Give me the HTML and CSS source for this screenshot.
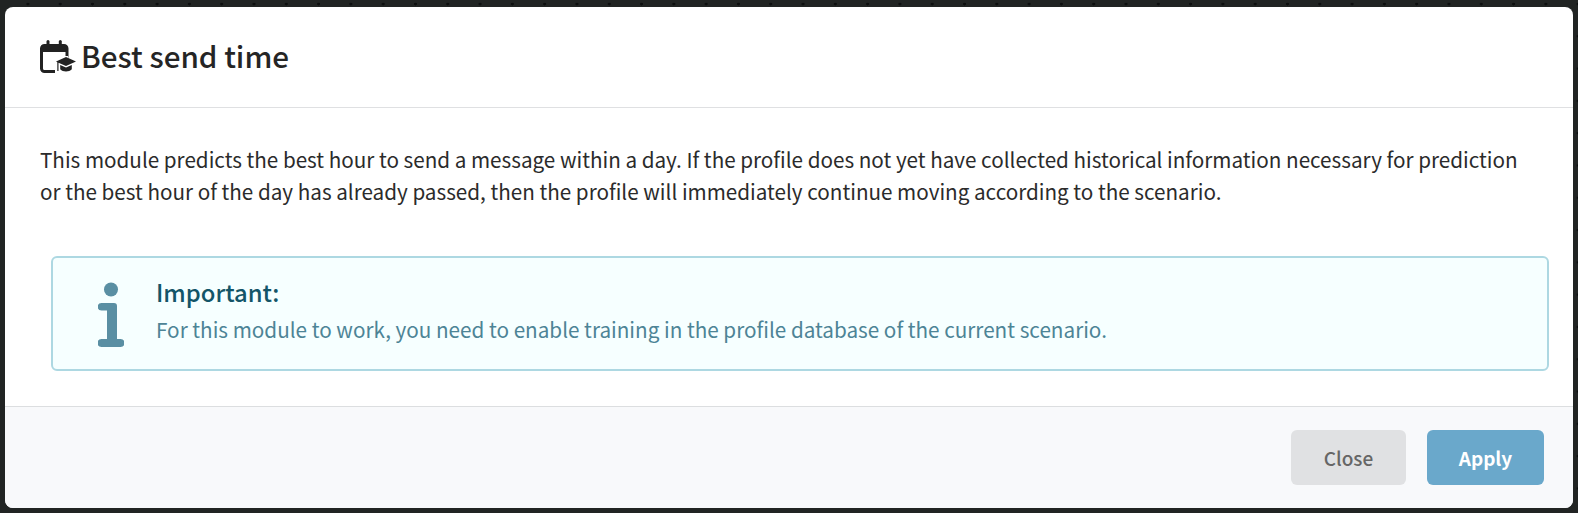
FILE: index.html
```html
<!DOCTYPE html>
<html lang="en">
<head>
<meta charset="utf-8">
<title>Best send time</title>
<link rel="stylesheet" href="styles.css">
</head>
<body>
<div class="modal">
  <header class="modal-header">
    <svg class="title-icon" viewBox="0 0 36 33" width="36" height="33" aria-hidden="true">
      <rect x="1.500" y="5.500" width="25.500" height="26" rx="3" fill="none" stroke="#222" stroke-width="3"/>
      <rect x="1.500" y="5.500" width="25.500" height="6.500" fill="#222"/>
      <rect x="6.500" y="0" width="3" height="7" rx="1.500" fill="#222"/>
      <rect x="18.800" y="0" width="3" height="7" rx="1.500" fill="#222"/>
      <path d="M15 33V20l5-4h8l1 3 7 2v12z" fill="#fff"/>
      <path d="M26 17l10 4.500-10 4.500-7.500-3.300V31h-1.200v-8.800L16 21.500z" fill="#222"/>
      <path d="M20.200 25l5.800 2.500 5.800-2.500v4.300c-1.400 1.500-3.500 2.200-5.800 2.200s-4.400-.7-5.800-2.200z" fill="#222"/>
    </svg>
    <h1 class="modal-title">Best send time</h1>
  </header>
  <main class="modal-body">
    <p class="description">This module predicts the best hour to send a message within a day. If the profile does not yet have collected historical information necessary for prediction or the best hour of the day has already passed, then the profile will immediately continue moving according to the scenario.</p>
    <div class="notice">
      <svg class="notice-icon" viewBox="0 0 26 66" width="26" height="66" aria-hidden="true">
        <circle cx="13" cy="7.500" r="7" fill="#5a8fa3"/>
        <path d="M3.500 21H16a3 3 0 0 1 3 3v33h3.500a4 4 0 0 1 0 8h-19a4 4 0 0 1 0-8H9V28.500H3.500a3.750 3.750 0 0 1 0-7.500z" fill="#5a8fa3"/>
      </svg>
      <div class="notice-text">
        <div class="notice-title">Important:</div>
        <div class="notice-message">For this module to work, you need to enable training in the profile database of the current scenario.</div>
      </div>
    </div>
  </main>
  <footer class="modal-footer">
    <button class="btn btn-close" type="button">Close</button>
    <button class="btn btn-apply" type="button">Apply</button>
  </footer>
</div>
</body>
</html>
```
FILE: styles.css
```css
* { box-sizing: border-box; }
html, body { height: 100%; }
body {
  margin: 0;
  padding: 7px 5px 5px 5px;
  overflow: hidden;
  background-color: #212423;
  background-image: radial-gradient(circle at 28px 4px, #0c0e0e 1.2px, transparent 1.6px);
  background-size: 32.3px 32.3px;
  background-repeat: repeat;
  font-family: "Noto Sans CJK SC", "Noto Sans", sans-serif;
  color: #222;
}
.modal {
  width: 1568px;
  height: 501px;
  background: #fff;
  border-radius: 8px;
  overflow: hidden;
  display: flex;
  flex-direction: column;
}
.modal-header {
  height: 101px;
  flex: none;
  display: flex;
  align-items: center;
  gap: 5px;
  padding: 0 35px 4px;
  border-bottom: 1px solid #dfe0e2;
}
.title-icon { flex: none; margin-top: 2px; }
.modal-title {
  margin: 0;
  font-size: 29.600px;
  font-weight: 500;
  color: #252525;
}
.modal-body {
  flex: 1;
  padding: 35px 24px 0 35px;
}
.description {
  margin: 0;
  padding-right: 30px;
  font-size: 20.660px;
  line-height: 32px;
  color: #2b2b2b;
}
.notice {
  margin: 49px 0 0 11px;
  height: 115px;
  display: flex;
  align-items: center;
  padding-left: 45px;
  gap: 32px;
  background: #f6ffff;
  border: 2px solid #add8e2;
  border-radius: 6px;
}
.notice-icon { flex: none; margin-top: 3px; }
.notice-text { margin-bottom: 7px; }
.notice-title {
  font-size: 23.800px;
  font-weight: 500;
  line-height: 32px;
  color: #135568;
}
.notice-message {
  font-size: 20.700px;
  line-height: 32px;
  margin-top: 5px;
  color: #4d8496;
}
.modal-footer {
  height: 102px;
  flex: none;
  display: flex;
  justify-content: flex-end;
  align-items: center;
  gap: 21px;
  padding: 0 29px 0 0;
  background: #f8f9fb;
  border-top: 1px solid #dcdee0;
}
.btn {
  height: 55px;
  border: 0;
  border-radius: 6px;
  font-family: inherit;
  font-size: 19px;
  cursor: pointer;
}
.btn-close { width: 115px; background: #e0e1e3; color: #666; font-weight: 500; }
.btn-apply { width: 117px; background: #6aa8cb; color: #fff; font-weight: 700; }
```
